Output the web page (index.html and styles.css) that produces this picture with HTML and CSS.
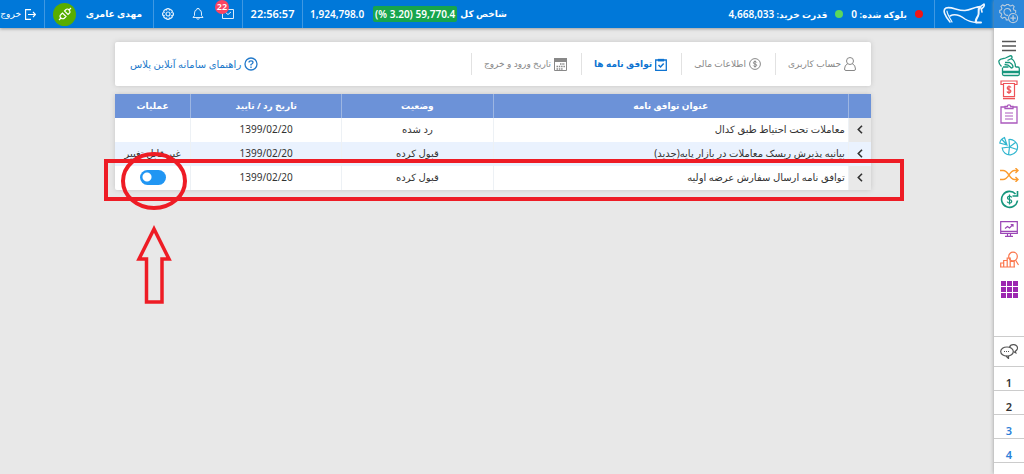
FILE: index.html
```html
<!DOCTYPE html>
<html lang="fa" dir="rtl">
<head>
<meta charset="utf-8">
<meta name="viewport" content="width=device-width, initial-scale=1">
<title>توافق نامه ها</title>
<link rel="stylesheet" href="styles.css">
</head>
<body>
<div class="app">
  <aside class="sidebar">
    <button class="side-config" aria-label="تنظیمات">
      <svg width="20" height="20" viewBox="0 0 22 22" fill="none" stroke="#b9cbdd" stroke-width="1.2"><path d="M10.500 17.500H8l-.6-2.200-1.700-.7-2 1.100-1.800-1.800L3 11.900l-.7-1.700L.8 9.500V7l1.700-.6.7-1.700-1-2L4 1l2 1 1.600-.6L8.200.600h2.500l.6 1 1.700.6 2-1 1.700 1.700-1 2 .7 1.700 1.900.6V10"/><path d="M10 12.400A3.800 3.800 0 1 1 13 8.500"/><circle cx="15.500" cy="15.500" r="5"/><path d="M15.500 12.500v6M12.500 15.500h6" stroke-width="1.500"/></svg>
    </button>
    <nav class="side-nav">
      <button class="side-menu" aria-label="منو"><svg width="14" height="12" viewBox="0 0 14 12" stroke="#555" stroke-width="1.400"><path d="M0 1.500h14M0 6h14M0 10.500h14"/></svg></button>
      <div class="side-group">
        <a class="side-item teal" href="#" aria-label="پرداخت"><svg width="22" height="22" viewBox="0 0 22 22" fill="none" stroke="currentColor" stroke-width="1.300"><path d="M4.500 12.500V19q0 1.500 1.500 1.500h14q1.300 0 1.300-1.500v-5.500q0-1.500-1.500-1.500h-2.300M5 12h5.500"/><path d="M4.500 17h17" stroke-width="2.500"/><path d="M3.500 11.500C1.500 9.500.500 7.500 1 5.800 2 3.500 6 3.500 7.500 3L12 .8q1.500-.3 2 1 .3 1.200-1 2L9.500 5.500M13 3.500c3 1.500 4.500 4.500 4.500 8.500M7 7.500h4.500c2 1 3.500 2.500 3.500 4.500q-1 1.800-2.500.3L10 10 6.500 9.500"/></svg></a>
        <a class="side-item red" href="#" aria-label="برداشت وجه"><svg width="18" height="20" viewBox="0 0 18 20" fill="none" stroke="currentColor" stroke-width="1.200"><path d="M3 4.500H1V1h16v3.500h-2"/><path d="M3.500 3.500v13h11v-13z"/><path d="M3 18.500h12" stroke-width="1.600"/><path d="M11 7.500q-.5-1-2-1-1.800 0-1.800 1.600 0 1.200 1.800 1.500t1.900 1.500q0 1.600-1.900 1.600-1.600 0-2-1.200M9 5.500v8.500"/></svg></a>
        <a class="side-item purple" href="#" aria-label="سفارش ها"><svg width="18" height="20" viewBox="0 0 18 20" fill="none" stroke="currentColor" stroke-width="1.300"><path d="M5 3H1v16h16V3h-4"/><path d="M5 4.500V2.500h2.300a1.700 1.700 0 0 1 3.400 0H13v2z"/><path d="M5 9h8M5 12h8M5 15h8" stroke-width="1"/></svg></a>
      </div>
      <div class="side-group">
        <a class="side-item cyan" href="#" aria-label="پرتفوی"><svg width="20" height="20" viewBox="0 0 20 20" fill="none" stroke="currentColor" stroke-width="1.200"><path d="M10 3.500A7.700 7.700 0 1 1 3.200 12L10.500 11zM10.500 11l6-4.500M10.500 11l7.500 2.500M10.500 11l-1 7.800"/><path d="M8 9 .8 7Q1.500 3 5.500 1.500zM8 9 3 3.500"/></svg></a>
        <a class="side-item orange" href="#" aria-label="جابجایی"><svg width="19" height="14" viewBox="0 0 19 14" fill="none" stroke="currentColor" stroke-width="1.400"><path d="M0 2.500h3C9 2.500 9 11.500 14.500 11.500H18M0 11.500h3C9 11.500 9 2.500 14.500 2.500H18M15.500 0 18 2.500 15.500 5M15.500 9l2.500 2.500-2.500 2.500"/></svg></a>
        <a class="side-item teal" href="#" aria-label="گردش حساب"><svg width="19" height="19" viewBox="0 0 19 19" fill="none" stroke="currentColor" stroke-width="1.600"><path d="M17.500 10.500A8 8 0 1 1 15.500 4"/><path d="M17.500 1v5h-5"/><path d="M11.700 7.500q-.5-1.300-2.200-1.300-2 0-2 1.700 0 1.200 2 1.600t2.200 1.700q0 1.800-2.200 1.800-1.800 0-2.300-1.400M9.500 4.500v10" stroke-width="1.200"/></svg></a>
      </div>
      <div class="side-group roomy">
        <a class="side-item violet" href="#" aria-label="دیده بان"><svg width="18" height="16" viewBox="0 0 18 16" fill="none" stroke="currentColor" stroke-width="1.200"><path d="M.7.700h16.600v11.600H.7zM1 10.300h16M7.500 12.500v2.500M10.500 12.500v2.500M5 15.300h8M5 7.500l2.500-2 2 1.500L13 3.500M10.700 3.500H13v2.300"/></svg></a>
        <a class="side-item coral" href="#" aria-label="تحلیل"><svg width="19" height="17" viewBox="0 0 19 17" fill="none" stroke="currentColor" stroke-width="1.200"><path d="M.7 16v-4h3v4zM3.700 16V9.500h3.500V16zM7.200 16V7h3v9zM10.200 16v-5.500h4V16zM0 16h15"/><circle cx="13" cy="5.500" r="4.300"/><path d="m15.500 9 3 5"/></svg></a>
        <a class="side-item grid" href="#" aria-label="ابزارها"><svg width="17" height="17" viewBox="0 0 17 17" fill="currentColor"><path d="M0 0h5v5H0zM6 0h5v5H6zM12 0h5v5h-5zM0 6h5v5H0zM6 6h5v5H6zM12 6h5v5h-5zM0 12h5v5H0zM6 12h5v5H6zM12 12h5v5h-5z"/></svg></a>
      </div>
    </nav>
    <div class="side-bottom">
      <a class="chat" href="#" aria-label="گفتگو"><svg width="18" height="15" viewBox="0 0 18 15" fill="none" stroke="#555" stroke-width="1.200"><path d="M9.500 3.500C10 1.500 12 .5 14 .700c2.500.3 4 2 3.300 4.300-.5 1.300-1.300 1.800-2 2.200l.5 1.600-2.300-1.100"/><ellipse cx="7" cy="7.500" rx="6.300" ry="4.500"/><path d="m6 12 2.500 2.500V12"/><path d="M4 7.500h6" stroke-dasharray="1 1"/></svg></a>
      <a class="page" href="#">1</a>
      <a class="page" href="#">2</a>
      <a class="page blue" href="#">3</a>
      <a class="page blue" href="#">4</a>
    </div>
  </aside>

  <div class="content">
    <header class="topbar">
      <div class="cell brand">
        <svg width="44" height="22" viewBox="0 0 44 22" fill="none" stroke="#eef6ff" stroke-linejoin="round" stroke-linecap="round"><path d="M7 19C2 13-1 7 3 5c5-2 12 3 19 2.500C28 7 31 4 37 3.500" stroke-width="1.600"/><path d="M4 8c0 3 3 7 5 11" stroke-width="1.200"/><path d="M7 13c5-3 11 0 15 3 3 2 6 3 12 3.500" stroke-width="1.500"/><path d="M37 4c-3 3 0 6-2 9-1 2-3 4-2 6.500h5" stroke-width="2"/><path d="M34 4.500q4-.5 7-3.500 1 2.500-2 4.500M38 5l1 4" stroke-width="1.600"/></svg>
      </div>
      <div class="balance">
        <span class="dot dot-red"></span><span>بلوکه شده: <b class="num">0</b></span>
        <span class="dot dot-green"></span><span>قدرت خرید: <b class="num">4,668,033</b></span>
      </div>
      <div class="cell index">
        <b>شاخص کل</b>
        <span class="change" dir="ltr">(% 3.20) 59,770.4</span>
        <b class="num">1,924,798.0</b>
      </div>
      <div class="cell clock">22:56:57</div>
      <div class="cell tools">
        <button class="mail" aria-label="پیام ها"><svg width="12" height="10" viewBox="0 0 12 10" fill="none" stroke="currentColor"><path d="M.5.500h11v9H.5zM3 3l3 2.500L9 3"/></svg><span class="count">22</span></button>
        <button aria-label="اعلان ها"><svg width="12" height="12" viewBox="0 0 12 12" fill="none" stroke="currentColor"><path d="M1 9.500h10L9.500 7.500V5q0-3-2.500-3.500V.500H5v1Q2.500 2 2.500 5v2.500zM4.500 10.500q1.500 1.500 3 0"/></svg></button>
        <button aria-label="تنظیمات"><svg width="12" height="12" viewBox="0 0 12 12" fill="none" stroke="currentColor" stroke-width="1.200"><path d="M5 .600h2l.4 1.300 1.200-.5 1.800 1.800-.6 1.200 1.600.6v2l-1.600.6.6 1.200-1.800 1.700-1.200-.5L7 11.400H5l-.4-1.400-1.200.5-1.800-1.700.6-1.200L.6 7V5l1.600-.6-.6-1.200 1.800-1.800 1.200.5z"/><circle cx="6" cy="6" r="2"/></svg></button>
      </div>
      <div class="cell user">
        <b>مهدی عامری</b>
        <span class="plug"><svg width="14" height="14" viewBox="0 0 14 14" fill="none" stroke="#fff" stroke-width="1.200"><path d="m1 13 2-2M13 1l-2 2M3 11q-2-2 0-3.500L4.500 6 8 9.500 6.500 11Q5 12.500 3 11zM11 3q2 2 0 3.500L10 7.500 6.500 4 7.500 3Q9.500 1 11 3z"/></svg></span>
      </div>
      <button class="logout"><svg width="11" height="11" viewBox="0 0 11 11" fill="none" stroke="currentColor" stroke-width="1.100"><path d="M5 .600h5.400v9.800H5M8 5.500H.7M3 3 .6 5.500 3 8" transform="matrix(-1 0 0 1 11 0)"/></svg>خروج</button>
    </header>

    <main class="main">
      <nav class="tabs card">
        <a class="tab" href="#"><svg width="12" height="14" viewBox="0 0 12 14" fill="none" stroke="currentColor"><ellipse cx="6" cy="4" rx="3.500" ry="3.500"/><path d="M3.700 6.700Q.5 8 .5 12q0 1.500 1.500 1.500h8q1.500 0 1.500-1.500 0-4-3.200-5.300"/></svg>حساب کاربری</a>
        <a class="tab" href="#"><svg width="12" height="12" viewBox="0 0 12 12" fill="none" stroke="currentColor"><circle cx="6" cy="6" r="5.400"/><path d="M7.700 4.500Q7.300 3.500 6 3.500q-1.600 0-1.600 1.200T6 6q1.700.2 1.700 1.300T6 8.500q-1.300 0-1.700-1M6 2.500v7"/></svg>اطلاعات مالی</a>
        <a class="tab active" href="#"><svg width="12" height="13" viewBox="0 0 12 13" fill="none" stroke="currentColor" stroke-width="1.300"><path d="M.7 2h10.600v10.300H.7z"/><path d="M3.500 1.500h5v1.300h-5z"/><path d="m3.500 7 2 2 3.200-3.500" stroke-width="1.500"/></svg>توافق نامه ها</a>
        <a class="tab" href="#"><svg width="13" height="13" viewBox="0 0 13 13" fill="none" stroke="currentColor"><path d="M.5 1.500h12v11H.5z"/><path d="M0 2h13" stroke-width="4"/><path d="M6 6h5M2.500 8.500H11M2.500 11H9" stroke-width="1.500" stroke-dasharray="1.500 .8"/></svg>تاریخ ورود و خروج</a>
        <a class="help" href="#"><svg width="14" height="14" viewBox="0 0 14 14" fill="none" stroke="currentColor" stroke-width="1.300"><circle cx="7" cy="7" r="6"/><path d="M5 5.500Q5 3.800 7 3.800t2 1.700Q9 6.500 7 7.500v1M7 9.500V11"/></svg>راهنمای سامانه آنلاین پلاس</a>
      </nav>

      <div class="table-wrap">
        <table class="agreements card">
          <colgroup><col class="c-open"><col class="c-title"><col class="c-state"><col class="c-date"><col class="c-action"></colgroup>
          <thead><tr><th></th><th>عنوان توافق نامه</th><th>وضعیت</th><th>تاریخ رد / تایید</th><th>عملیات</th></tr></thead>
          <tbody>
            <tr><td class="open"><button aria-label="باز کردن"><svg width="6" height="9" viewBox="0 0 6 9" fill="none" stroke="#333" stroke-width="1.600"><path d="M5 .8 1.300 4.500 5 8.200"/></svg></button></td><td class="title">معاملات تحت احتیاط طبق کدال</td><td>رد شده</td><td>1399/02/20</td><td></td></tr>
            <tr><td class="open"><button aria-label="باز کردن"><svg width="6" height="9" viewBox="0 0 6 9" fill="none" stroke="#333" stroke-width="1.600"><path d="M5 .8 1.300 4.500 5 8.200"/></svg></button></td><td class="title">بیانیه پذیرش ریسک معاملات در بازار پایه(جدید)</td><td>قبول کرده</td><td>1399/02/20</td><td>غیر قابل تغییر</td></tr>
            <tr><td class="open"><button aria-label="باز کردن"><svg width="6" height="9" viewBox="0 0 6 9" fill="none" stroke="#333" stroke-width="1.600"><path d="M5 .8 1.300 4.500 5 8.200"/></svg></button></td><td class="title">توافق نامه ارسال سفارش عرضه اولیه</td><td>قبول کرده</td><td>1399/02/20</td><td><input class="switch" type="checkbox" role="switch" checked aria-label="توافق نامه ارسال سفارش عرضه اولیه"></td></tr>
          </tbody>
        </table>
        <div class="mark-row"></div>
        <svg class="mark-arrow" width="70" height="156" viewBox="0 0 70 156" fill="none" stroke="#ee1c25" stroke-width="4"><ellipse cx="35" cy="31" rx="31" ry="27"/><path stroke-width="3.500" d="M35 79 20 109h7.500v43H43v-43h7z"/></svg>
      </div>
    </main>
  </div>
</div>
</body>
</html>
```
FILE: styles.css
```css
* { box-sizing: border-box; }
body {
  margin: 0;
  background: #e8e8e8;
  color: #333;
  font: 10px/16px "Noto Sans", "DejaVu Sans", sans-serif;
  overflow-x: hidden;
}
button { margin: 0; padding: 0; border: 0; background: none; color: inherit; font: inherit; cursor: pointer; }
a { color: inherit; text-decoration: none; }
svg { display: block; flex: none; }
.app { display: flex; min-height: 100vh; }

.sidebar { display: flex; flex-direction: column; flex: none; width: 30px; background: #fff; box-shadow: 0 0 4px #999; z-index: 2; }
.side-config { display: flex; align-items: center; justify-content: center; height: 28px; background: #2b87da; }
.side-nav { display: flex; flex-direction: column; gap: 3px; padding-top: 10px; }
.side-menu { display: flex; align-items: center; justify-content: center; height: 16px; margin-bottom: -3px; }
.side-item { display: flex; align-items: center; justify-content: center; height: 24px; }
.side-group .cyan { height: 34px; }
.roomy .side-item { height: 30px; }
.teal { color: #16967d; }
.red { color: #ee5358; }
.purple { color: #ab59bd; }
.cyan { color: #30b6cf; }
.orange { color: #fb9c2f; }
.violet { color: #9a45b5; }
.coral { color: #fb774d; }
.grid { color: #9c27b0; }
.side-bottom { margin-top: 32px; }
.chat { display: flex; align-items: center; justify-content: center; height: 31px; border-top: 1px solid #ccc; border-bottom: 1px solid #ccc; }
.page { display: flex; align-items: center; justify-content: center; height: 24px; padding-top: 8px; border-bottom: 1px solid #ccc; font-size: 11px; font-weight: 600; }
.blue { color: #2b7fd8; }

.content { flex: 1; min-width: 0; }
.topbar { display: flex; height: 28px; background: #0078d9; color: #fff; box-shadow: 0 1px 3px #999; white-space: nowrap; font-size: 9px; }
.cell { display: flex; align-items: center; border-left: 1px solid #3f98e2; }
.brand { width: 60px; justify-content: center; }
.balance { display: flex; align-items: center; gap: 8px; padding-right: 11px; margin-left: auto; font-weight: 600; }
.num { font-size: 10px; font-weight: 600; }
.dot { width: 8px; height: 8px; border-radius: 50%; }
.dot-red { background: #f01414; }
.dot-green { background: #5bd75b; }
.index { padding-left: 7px; }
.change { margin: 0 3px 0 9px; padding: 0 2px; background: #17a54d; border-radius: 2px; font-size: 10px; font-weight: 600; }
.clock { justify-content: center; width: 60px; font-size: 11px; font-weight: 600; }
.tools { gap: 18px; width: 89px; padding-right: 8px; color: #dcecfb; }
.mail { position: relative; }
.count { position: absolute; right: 5px; top: -9px; width: 14px; height: 14px; border-radius: 50%; background: #fb4361; color: #fff; font-size: 9px; line-height: 14px; font-weight: 600; }
.user { justify-content: space-between; width: 109px; padding: 0 11px 0 8px; }
.plug { display: flex; align-items: center; justify-content: center; width: 23px; height: 23px; border-radius: 50%; background: #58ad00; }
.logout { display: flex; align-items: center; gap: 4px; width: 44px; padding-right: 8px; }

.main { padding: 14px 123px 16px 115px; }
.card { background: #fff; border-radius: 2px; box-shadow: 0 0 5px #c4c4c4; }
.tabs { display: flex; align-items: center; height: 44px; padding: 0 15px; color: #888; font-size: 9px; white-space: nowrap; }
.tab { display: flex; align-items: center; gap: 3px; height: 22px; padding-left: 12px; margin-left: 14px; border-left: 1px solid #e2e2e2; }
.tab.active { color: #0f74d1; font-weight: 600; }
.help { display: flex; align-items: center; gap: 3px; margin-right: auto; color: #2279ca; font-size: 10px; }

.table-wrap { position: relative; margin-top: 8px; }
.agreements { width: 100%; border-collapse: collapse; table-layout: fixed; }
.c-open { width: 3%; }
.c-title { width: 47%; }
.c-state, .c-date { width: 20%; }
.c-action { width: 10%; }
.agreements th { height: 24px; padding: 0; background: #6c92d8; color: #fff; border-left: 1px solid #9db6e2; font-size: 9px; }
.agreements td { height: 24px; padding: 0 0 2px; text-align: center; border-left: 1px solid #edf1f5; white-space: nowrap; }
.agreements th:last-child, .agreements td:last-child { border-left: 0; }
.agreements tr:nth-child(2) td { background: #eaf2fe; }
.agreements tbody .open { background: #e9e9e9; }
.agreements tbody .title { padding-right: 3px; text-align: right; }
.open button { display: flex; align-items: center; justify-content: center; width: 100%; height: 16px; }
.switch { appearance: none; display: block; width: 26px; height: 15px; margin: 0 auto; border-radius: 8px; background: radial-gradient(circle at 7px 7px, #fff 4px, #2196f3 5px); cursor: pointer; }

.mark-row { position: absolute; left: -11px; right: -33px; top: 65px; height: 42px; border: 4px solid #ee1c25; pointer-events: none; }
.mark-arrow { position: absolute; left: 4px; top: 56px; pointer-events: none; }
```
